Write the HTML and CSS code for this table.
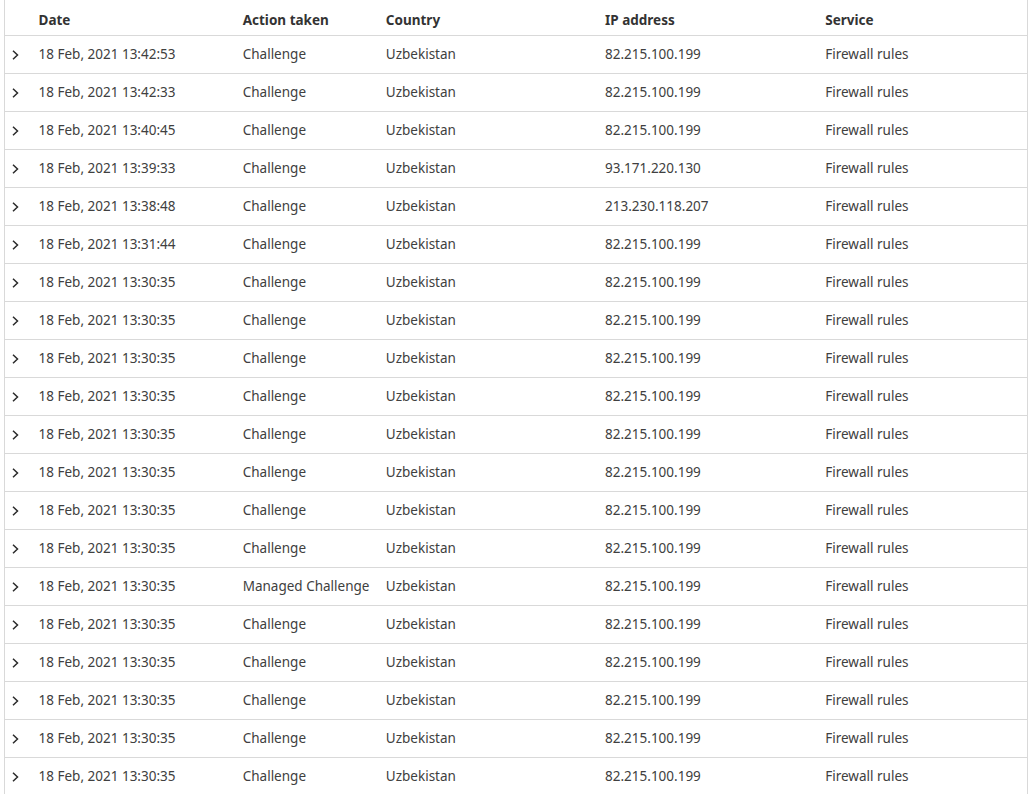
FILE: index.html
```html
<!DOCTYPE html>
<html lang="en">
<head>
<meta charset="UTF-8" />
<title>Firewall events</title>
<link rel="stylesheet" href="styles.css">
</head>
<body>

<table class="events">
  <colgroup>
    <col class="c-toggle">
    <col class="c-date">
    <col class="c-action">
    <col class="c-country">
    <col class="c-ip">
    <col class="c-service">
  </colgroup>
  <thead>
    <tr>
      <th></th>
      <th>Date</th>
      <th>Action taken</th>
      <th>Country</th>
      <th>IP address</th>
      <th>Service</th>
    </tr>
  </thead>
  <tbody id="rows"></tbody>
</table>

<script>
  // event log rows
  const events = [
    ['18 Feb, 2021 13:42:53', 'Challenge', '82.215.100.199'],
    ['18 Feb, 2021 13:42:33', 'Challenge', '82.215.100.199'],
    ['18 Feb, 2021 13:40:45', 'Challenge', '82.215.100.199'],
    ['18 Feb, 2021 13:39:33', 'Challenge', '93.171.220.130'],
    ['18 Feb, 2021 13:38:48', 'Challenge', '213.230.118.207'],
    ['18 Feb, 2021 13:31:44', 'Challenge', '82.215.100.199'],
    ['18 Feb, 2021 13:30:35', 'Challenge', '82.215.100.199'],
    ['18 Feb, 2021 13:30:35', 'Challenge', '82.215.100.199'],
    ['18 Feb, 2021 13:30:35', 'Challenge', '82.215.100.199'],
    ['18 Feb, 2021 13:30:35', 'Challenge', '82.215.100.199'],
    ['18 Feb, 2021 13:30:35', 'Challenge', '82.215.100.199'],
    ['18 Feb, 2021 13:30:35', 'Challenge', '82.215.100.199'],
    ['18 Feb, 2021 13:30:35', 'Challenge', '82.215.100.199'],
    ['18 Feb, 2021 13:30:35', 'Challenge', '82.215.100.199'],
    ['18 Feb, 2021 13:30:35', 'Managed Challenge', '82.215.100.199'],
    ['18 Feb, 2021 13:30:35', 'Challenge', '82.215.100.199'],
    ['18 Feb, 2021 13:30:35', 'Challenge', '82.215.100.199'],
    ['18 Feb, 2021 13:30:35', 'Challenge', '82.215.100.199'],
    ['18 Feb, 2021 13:30:35', 'Challenge', '82.215.100.199'],
    ['18 Feb, 2021 13:30:35', 'Challenge', '82.215.100.199']
  ];

  const chevron = '<svg class="chevron" viewBox="0 0 10 12" width="10" height="12"><path d="M2 1.8 L6.5 6 L2 10.2" fill="none" stroke="#2b2b2b" stroke-width="1.5"/></svg>';

  const tbody = document.getElementById('rows');
  events.forEach(e => {
    const tr = document.createElement('tr');
    tr.innerHTML =
      '<td class="toggle">' + chevron + '</td>' +
      '<td>' + e[0] + '</td>' +
      '<td>' + e[1] + '</td>' +
      '<td>Uzbekistan</td>' +
      '<td>' + e[2] + '</td>' +
      '<td>Firewall rules</td>';
    tbody.appendChild(tr);
  });
</script>

</body>
</html>
```

FILE: styles.css
```css
body {
  margin: 0 5px 0 4px;
  background: #fff;
  font-family: 'Noto Sans', sans-serif;
  color: #404040;
}
.events {
  width: 100%;
  table-layout: fixed;
  border-collapse: collapse;
  border-left: 1px solid #d9d9d9;
  border-right: 1px solid #d9d9d9;
  font-size: 13.5px;
}
.c-toggle { width: 26px; }
.c-date { width: 204px; }
.c-action { width: 143px; }
.c-country { width: 219px; }
.c-ip { width: 220px; }
.c-service { width: 210px; }
th {
  height: 31px;
  padding: 4px 8px 0;
  text-align: left;
  font-weight: 700;
  color: #333;
  border-bottom: 1px solid #d9d9d9;
}
td {
  height: 35px;
  padding: 0 8px 2px;
  white-space: nowrap;
  border-bottom: 1px solid #d9d9d9;
}
td.toggle {
  padding: 0 0 0 6px;
}
.chevron {
  display: block;
}
```
